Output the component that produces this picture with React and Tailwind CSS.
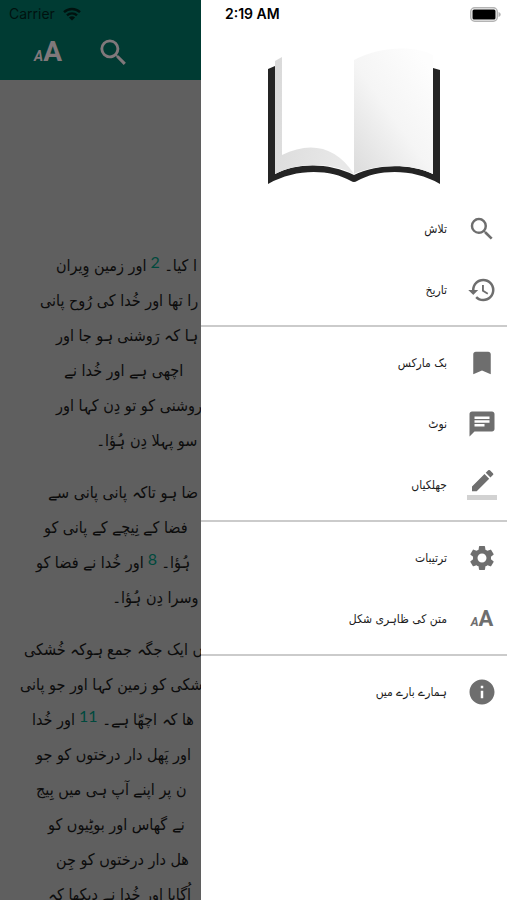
import {
  MdBookmark,
  MdChat,
  MdHistory,
  MdInfo,
  MdSearch,
  MdSettings,
} from "react-icons/md";

const paragraphs = [
  [
    { indent: "pl-14", before: "ا کیا۔", verse: "2", text: "اور زمین وِیران" },
    { indent: "pl-10", text: "را تھا اور خُدا کی رُوح پانی" },
    { indent: "pl-14", text: "ہا کہ رَوشنی ہو جا اور" },
    { indent: "pl-16", text: "اچھی ہے اور خُدا نے" },
    { indent: "pl-14", text: "روشنی کو تو دِن کہا اور" },
    { indent: "pl-24", text: "سو پہلا دِن ہُؤا۔" },
  ],
  [
    { indent: "pl-12", text: "ضا ہو تاکہ پانی پانی سے" },
    { indent: "pl-11", text: "فضا کے نِیچے کے پانی کو" },
    { indent: "pl-9", before: "ہُؤا۔", verse: "8", text: "اور خُدا نے فضا کو" },
    { indent: "pl-28", text: "وسرا دِن ہُؤا۔" },
  ],
  [
    { indent: "pl-6", text: "ں ایک جگہ جمع ہوکہ خُشکی" },
    { indent: "pl-5", text: "شکی کو زمین کہا اور جو پانی" },
    { indent: "pl-8", before: "ھا کہ اچھّا ہے۔", verse: "11", text: "اور خُدا" },
    { indent: "pl-9", text: "اور پَھل دار درختوں کو جو" },
    { indent: "pl-9", text: "ن پر اپنے آپ ہی میں بِیج" },
    { indent: "pl-12", text: "نے گھاس اور بوٹِیوں کو" },
    { indent: "pl-14", text: "ھل دار درختوں کو جِن" },
    { indent: "pl-12", text: "اُگایا اور خُدا نے دیکھا کہ" },
  ],
];

const sections = [
  [
    { label: "تلاش", icon: <MdSearch size={30} /> },
    { label: "تاریخ", icon: <MdHistory size={30} /> },
  ],
  [
    { label: "بک مارکس", icon: <MdBookmark size={30} /> },
    { label: "نوٹ", icon: <MdChat size={30} /> },
    { label: "جھلکیاں", icon: <HighlightIcon /> },
  ],
  [
    { label: "ترتیبات", icon: <MdSettings size={30} /> },
    { label: "متن کی ظاہری شکل", icon: <TextSizeIcon small="text-xs" large="text-[22px]" /> },
  ],
  [{ label: "ہمارے بارے میں", icon: <MdInfo size={30} /> }],
];

function TextSizeIcon({ small, large }) {
  return (
    <span
      aria-hidden="true"
      dir="ltr"
      className="flex items-baseline justify-center font-['Roboto',sans-serif] font-bold"
    >
      <span className={`${small} leading-none italic`}>A</span>
      <span className={`${large} leading-none`}>A</span>
    </span>
  );
}

function HighlightIcon() {
  return (
    <svg width="30" height="30" viewBox="0 0 24 24" fill="currentColor">
      <path d="M17.75 7 14 3.25l-10 10V17h3.75l10-10zm2.96-2.96a1 1 0 0 0 0-1.41L18.37.29a1 1 0 0 0-1.41 0L15 2.25 18.75 6l1.96-1.96z" />
      <path d="M0 20h24v4H0z" fill="#d2d2d2" />
    </svg>
  );
}

function WifiIcon() {
  return (
    <svg width="18" height="14" viewBox="0 0 18 14" fill="none" stroke="currentColor" strokeWidth="2.4">
      <path d="M1 5.2a11.5 11.5 0 0 1 16 0" />
      <path d="M4 8.4a7.2 7.2 0 0 1 10 0" />
      <path d="M9 13.6 5.9 10.5a4.4 4.4 0 0 1 6.2 0z" fill="currentColor" stroke="none" />
    </svg>
  );
}

function BatteryIcon() {
  return (
    <svg width="31" height="15" viewBox="0 0 31 15">
      <rect x="0.75" y="0.75" width="26.5" height="13.5" rx="4" fill="#fff" stroke="#b4b4b4" strokeWidth="1.5" />
      <rect x="2.5" y="2.5" width="23" height="10" rx="1.5" fill="#000" />
      <path d="M28.5 5v5c1.4-.4 2.2-1.3 2.2-2.5s-.8-2.1-2.2-2.5z" fill="#b4b4b4" />
    </svg>
  );
}

function BookLogo() {
  return (
    <svg width="172" height="136" viewBox="0 0 172 136" role="img" aria-label="Book">
      <defs>
        <linearGradient id="rightPage" x1="0.9" y1="0.1" x2="0.1" y2="1">
          <stop offset="0" stopColor="#fdfdfd" />
          <stop offset="0.5" stopColor="#f5f5f5" />
          <stop offset="1" stopColor="#dedede" />
        </linearGradient>
        <linearGradient id="leftPage" x1="0" y1="0" x2="1" y2="0.3">
          <stop offset="0" stopColor="#d9d9d9" />
          <stop offset="1" stopColor="#e8e8e8" />
        </linearGradient>
      </defs>
      <path d="M0 21 7 18V126C30 114 62 115 86 127 108 116 142 115 165 126V20L172 22V136C145 120 110 121 89 133Q86 135 83 133C62 121 28 120 0 136Z" fill="#242424" />
      <path d="M7 13 14 9V107C42 93 68 98 86 126 62 114 30 114 7 126Z" fill="url(#leftPage)" />
      <path d="M86 12C108 0 143-4 165 7V126C142 115 108 116 86 126Z" fill="url(#rightPage)" />
    </svg>
  );
}

function Reader() {
  return (
    <main className="flex min-w-0 flex-1 flex-col overflow-hidden bg-[#5f5f5f]">
      <header className="h-20 shrink-0 bg-[#003b33]">
        <div className="flex h-7 items-center gap-2 pl-[9px] text-sm text-[#00120f]">
          <span>Carrier</span>
          <WifiIcon />
        </div>
        <div className="flex items-center gap-8 pl-8 text-[#80787b]">
          <button aria-label="متن کی ظاہری شکل" className="flex h-12 w-8 items-center justify-center">
            <TextSizeIcon small="text-sm" large="text-[28px]" />
          </button>
          <button aria-label="تلاش" className="flex h-12 items-center">
            <MdSearch size={35} />
          </button>
        </div>
      </header>

      <article lang="ur" className="flex flex-col gap-[17px] pt-[168px] font-['DejaVu_Sans_Condensed','DejaVu_Sans',sans-serif] text-base text-[#0c0c0c]">
        {paragraphs.map((lines, i) => (
          <div key={i}>
            {lines.map((line) => (
              <div key={line.text} className={`flex h-[35px] items-center ${line.indent}`}>
                <p dir="rtl" className="shrink-0 whitespace-nowrap">
                  {line.before}
                  {line.verse && (
                    <span className="mr-1 ml-1 align-[3px] font-['Lato',sans-serif] text-base leading-none text-[#00493d]">
                      {line.verse}
                    </span>
                  )}
                  {line.text}
                </p>
              </div>
            ))}
          </div>
        ))}
      </article>
    </main>
  );
}

function Drawer() {
  return (
    <aside className="flex w-[306px] shrink-0 flex-col bg-white">
      <div className="flex h-7 items-center justify-between pr-1.5 pl-6 text-sm font-semibold text-black">
        <span>2:19 AM</span>
        <BatteryIcon />
      </div>
      <div className="flex justify-center pt-5 pb-3.5">
        <BookLogo />
      </div>
      <nav lang="ur" dir="rtl">
        {sections.map((items, i) => (
          <ul key={i} className="border-b-2 border-[#cbcbcb] py-[5px] first:pt-0 last:border-b-0">
            {items.map((item) => (
              <li key={item.label}>
                <button className="flex h-[61px] w-full items-center gap-5 pr-[10px] text-[#6e6e6e]">
                  <span className="flex w-[30px] justify-center">{item.icon}</span>
                  <span className="font-['DejaVu_Sans_Condensed','DejaVu_Sans',sans-serif] text-xs text-[#1c1c1c]">
                    {item.label}
                  </span>
                </button>
              </li>
            ))}
          </ul>
        ))}
      </nav>
    </aside>
  );
}

export default function App() {
  return (
    <div className="flex h-screen overflow-hidden font-['Inter','Liberation_Sans',sans-serif]">
      <Reader />
      <Drawer />
    </div>
  );
}
